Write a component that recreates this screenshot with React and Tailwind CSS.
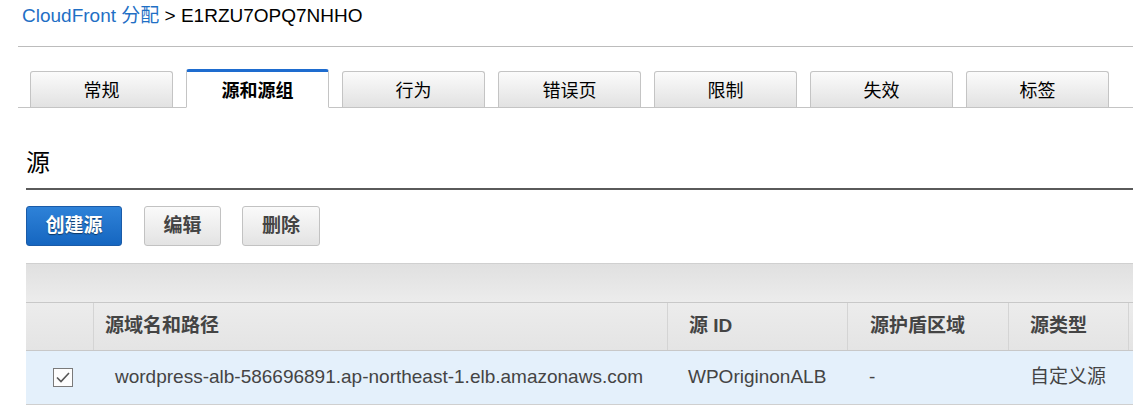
import React from 'react'

const tabs = ['常规', '源和源组', '行为', '错误页', '限制', '失效', '标签']

export default function App() {
  return (
    <div className="w-[1133px] h-[408px] overflow-hidden bg-white text-[#16191f]" style={{ fontFamily: '"Liberation Sans", "Noto Sans CJK SC", sans-serif' }}>
      <div className="pl-[22px] pt-[4px] h-[46px] text-[19px] leading-[24px]">
        <a className="text-[#1f6fc5]">CloudFront 分配</a>
        <span className="text-black"> &gt; E1RZU7OPQ7NHHO</span>
      </div>
      <div className="ml-[18px] border-t border-[#bcbcbc]" />

      <div className="ml-[18px] mt-[22px] flex items-end gap-[13px] pl-[12px] border-b border-[#c4c4c4] h-[39px]">
        {tabs.map((t, i) =>
          i === 1 ? (
            <div key={t} className="w-[143px] h-[39px] -mb-px pt-[3px] bg-white border border-[#c4c4c4] border-b-white border-t-[3px] border-t-[#1e6ccf] rounded-t-[3px] flex items-center justify-center text-[18px] font-bold text-black">
              {t}
            </div>
          ) : (
            <div key={t} className="w-[143px] h-[36px] pt-[3px] bg-gradient-to-b from-[#fbfbfb] to-[#e2e2e2] border border-[#c4c4c4] border-b-0 rounded-t-[3px] flex items-center justify-center text-[18px] text-black">
              {t}
            </div>
          )
        )}
      </div>

      <div className="ml-[26px] mt-[40px] text-[24px] leading-[30px] text-black">源</div>
      <div className="ml-[26px] mt-[10px] border-t-2 border-[#5a5a5a]" />

      <div className="ml-[26px] mt-[16px] flex">
        <button className="w-[96px] h-[40px] rounded-[3px] border border-[#1a5ba8] bg-gradient-to-b from-[#2e82d8] to-[#1566c0] text-white font-bold text-[19px] [text-shadow:0_1px_1px_rgba(0,0,0,0.5)]">
          创建源
        </button>
        <button className="ml-[22px] w-[77px] h-[40px] rounded-[3px] border border-[#c2c2c2] bg-gradient-to-b from-[#fafafa] to-[#e3e3e3] text-[#444] font-bold text-[19px]">
          编辑
        </button>
        <button className="ml-[21px] w-[78px] h-[40px] rounded-[3px] border border-[#c2c2c2] bg-gradient-to-b from-[#fafafa] to-[#e3e3e3] text-[#444] font-bold text-[19px]">
          删除
        </button>
      </div>

      <div className="ml-[26px] mt-[17px] w-[1120px] border-t border-[#d0d0d0]">
        <div className="h-[39px] bg-gradient-to-b from-[#e0e0e0] to-[#ececec] border-b border-[#c8c8c8]" />
        <div className="grid grid-cols-[67px_574px_180px_161px_120px_18px] h-[48px] bg-gradient-to-b from-[#ececec] to-[#e4e4e4] border-b border-[#c8c8c8] text-[19px] font-bold text-[#444]">
          <div />
          <div className="border-l border-[#d4d4d4] flex items-center pl-[11px]">源域名和路径</div>
          <div className="border-l border-[#d4d4d4] flex items-center pl-[21px]">源 ID</div>
          <div className="border-l border-[#d4d4d4] flex items-center pl-[22px]">源护盾区域</div>
          <div className="border-l border-[#d4d4d4] flex items-center pl-[21px]">源类型</div>
          <div className="border-l border-[#d4d4d4]" />
        </div>
        <div className="grid grid-cols-[67px_574px_180px_161px_120px_18px] h-[54px] bg-[#e4f0fb] border-b border-[#cfcfcf] text-[19px] text-[#444]">
          <div className="flex items-center pl-[27px]">
            <svg width="20" height="19" viewBox="0 0 20 19">
              <rect x="0.5" y="0.5" width="19" height="18" fill="#fdfdfd" stroke="#7a7a7a" />
              <path d="M4 9.5 L8 13.5 L16 5" fill="none" stroke="#555" strokeWidth="1.6" />
            </svg>
          </div>
          <div className="flex items-center pl-[22px]">wordpress-alb-586696891.ap-northeast-1.elb.amazonaws.com</div>
          <div className="flex items-center pl-[21px]">WPOriginonALB</div>
          <div className="flex items-center pl-[22px]">-</div>
          <div className="flex items-center pl-[22px]">自定义源</div>
          <div />
        </div>
      </div>
    </div>
  )
}
